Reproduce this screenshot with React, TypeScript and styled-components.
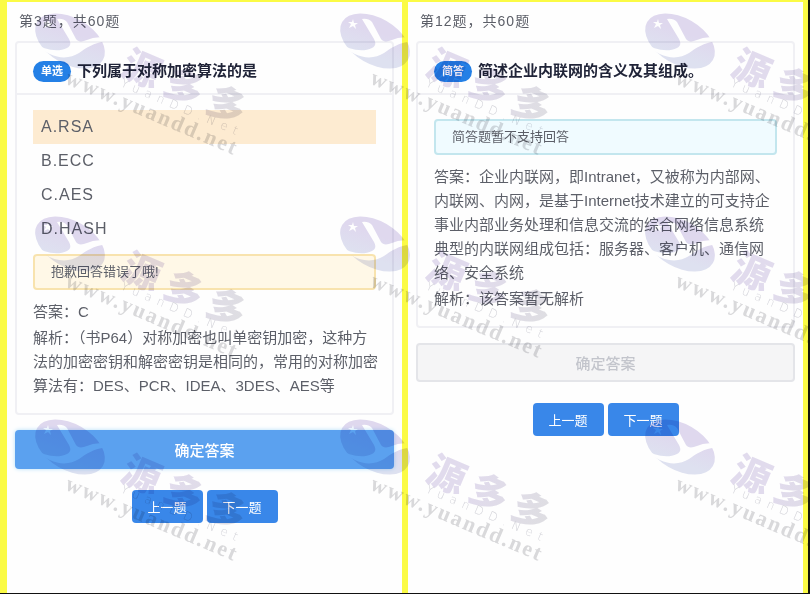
import React, { useState } from "react";
import styled, { createGlobalStyle } from "styled-components";

const GlobalStyle = createGlobalStyle`
  *, *::before, *::after { box-sizing: border-box; }
  body {
    margin: 0;
    color: #5c5f68;
    font-family: "Liberation Sans", "Noto Sans CJK SC", sans-serif;
    font-size: 15px;
  }
  button, input { font-family: inherit; margin: 0; }
`;

const Page = styled.main`
  position: relative;
  display: grid;
  grid-template-columns: 1fr 1fr;
  gap: 6px;
  min-height: 100vh;
  padding: 2px 5px 0 7px;
  background: #fbfb45;
  border-right: 2px solid #15170a;
  border-bottom: 1px solid #111;
  overflow: hidden;
`;

const Screen = styled.section`
  min-width: 0;
  padding: 7px 8px 0;
  background: #fefefe;
`;

const Progress = styled.p`
  margin: 0;
  padding: 0 4px;
  font-size: 14px;
  line-height: 24px;
  letter-spacing: 1px;
`;

const Card = styled.article`
  margin-top: 8px;
  border: 2px solid #f0f0f4;
  border-radius: 4px;
`;

const CardHeader = styled.header`
  display: flex;
  align-items: center;
  gap: 6px;
  height: 52px;
  padding: 6px 16px 0;
  border-bottom: 2px solid #f0f0f4;
`;

const Badge = styled.span`
  flex: none;
  padding: 0 8px;
  border-radius: 11px;
  background: #2480e6;
  color: #fff;
  font-size: 11px;
  font-weight: 700;
  line-height: 21px;
`;

const Title = styled.h2`
  margin: 0;
  color: #202438;
  font-size: 15px;
  font-weight: 700;
  line-height: 22px;
  white-space: nowrap;
`;

const CardBody = styled.div<{ $top: number; $bottom: number }>`
  padding: ${(p) => p.$top}px 16px ${(p) => p.$bottom}px;
`;

const Options = styled.div`
  display: flex;
  flex-direction: column;
`;

const Option = styled.label<{ $picked: boolean }>`
  display: flex;
  height: 34px;
  padding: 0 8px;
  background: ${(p) => (p.$picked ? "#fdebd1" : "transparent")};
  font-size: 16px;
  line-height: 34px;
  letter-spacing: 1px;
  cursor: pointer;
`;

const HiddenRadio = styled.input`
  appearance: none;
  width: 0;
  height: 0;
`;

const Alert = styled.div<{ $tone: "warning" | "info" }>`
  margin-top: ${(p) => (p.$tone === "warning" ? 8 : 0)}px;
  padding: 0 16px;
  border: 2px solid ${(p) => (p.$tone === "warning" ? "#f8e3ae" : "#c3e6ee")};
  border-radius: 4px;
  background: ${(p) => (p.$tone === "warning" ? "#fff8e7" : "#f0fbff")};
  font-size: 13px;
  line-height: 32px;
`;

const Paragraph = styled.p<{ $gap: number }>`
  margin: ${(p) => p.$gap}px 0 0;
  font-size: 15px;
  line-height: 24px;
  white-space: nowrap;
`;

const Line = styled.span`
  display: block;
`;

const Submit = styled.button`
  display: block;
  width: 100%;
  height: 39px;
  margin-top: 15px;
  padding: 0;
  border: 0;
  border-radius: 4px;
  background: #5ba1ef;
  box-shadow: 0 0 4px #b5e0fa;
  color: #fff;
  font-size: 15px;
  font-weight: 500;

  &:disabled {
    border: 2px solid #e4e5e9;
    background: #f5f5f6;
    box-shadow: none;
    color: #c3c5cc;
  }
`;

const Pager = styled.nav`
  display: flex;
  justify-content: center;
  gap: 4px;
  margin-top: 21px;
`;

const PagerButton = styled.button`
  width: 71px;
  height: 33px;
  padding: 0;
  border: 0;
  border-radius: 4px;
  background: #3987e9;
  color: #fff;
  font-size: 13px;
`;

/* Watermarks lie over the whole page and let clicks through. */
const WatermarkLayer = styled.div`
  position: absolute;
  inset: 0;
  display: grid;
  grid-template-columns: repeat(3, 305px);
  grid-auto-rows: 203px;
  overflow: hidden;
  pointer-events: none;
  mix-blend-mode: multiply;
`;

const WatermarkSvg = styled.svg`
  display: block;
  width: 305px;
  height: 203px;
`;

const BrandText = styled.text`
  font-family: "Noto Sans CJK SC", sans-serif;
  font-size: 38px;
  font-weight: 900;
  letter-spacing: 8px;
`;

const LatinText = styled.text`
  font-family: "DejaVu Sans", sans-serif;
  font-size: 12px;
  font-weight: 200;
  letter-spacing: 6px;
`;

const UrlText = styled.text`
  font-family: "Liberation Serif", serif;
  font-size: 22px;
  font-weight: 700;
  letter-spacing: 2px;
`;

function Watermark({ id }: { id: string }) {
  return (
    <WatermarkSvg viewBox="0 0 305 203">
      <defs>
        <linearGradient id={`${id}-disc`} x1="0" y1="0" x2="0.3" y2="1">
          <stop offset="0.4" stopColor="#e0d9ef" />
          <stop offset="0.9" stopColor="#dfe2f1" />
        </linearGradient>
        <linearGradient id={`${id}-brand`} x1="0" y1="0" x2="1" y2="0">
          <stop offset="0.3" stopColor="#e2dcee" />
          <stop offset="1" stopColor="#dfdfe2" />
        </linearGradient>
        <mask id={`${id}-cut`} maskUnits="userSpaceOnUse" x="0" y="0" width="305" height="203">
          <rect width="305" height="203" fill="#fff" />
          <path
            d="M34 43 C43 49 57 53 67 48 C71 46 71 43 69 39 L57 19 Q63 18 67 22 L76 39 C78 42 82 42 87 40 Q95 36 107 38 L107 41 C93 43 86 48 79 53 C68 60 52 60 34 43Z"
            fill="#000"
          />
          <path
            d="M48 19 L49 23 L53 23 L50 25 L51 29 L48 26 L44 28 L46 24 L43 22 L47 22Z"
            fill="#000"
          />
        </mask>
      </defs>
      <g mask={`url(#${id}-cut)`}>
        <ellipse
          cx="70"
          cy="41"
          rx="38"
          ry="23"
          transform="rotate(30 70 41)"
          fill={`url(#${id}-disc)`}
        />
      </g>
      <BrandText transform="translate(119 74) rotate(23)" fill={`url(#${id}-brand)`}>
        源多多
      </BrandText>
      <LatinText transform="translate(120 86) rotate(23)" fill="#d6d6dc">
        YuanDD.Net
      </LatinText>
      <UrlText transform="translate(64 83) rotate(23)" fill="#dadadc">
        www.yuandd.net
      </UrlText>
    </WatermarkSvg>
  );
}

const choices = ["A.RSA", "B.ECC", "C.AES", "D.HASH"];

const explanation = [
  "解析：（书P64）对称加密也叫单密钥加密，这种方",
  "法的加密密钥和解密密钥是相同的，常用的对称加密",
  "算法有：DES、PCR、IDEA、3DES、AES等",
];

const intranetAnswer = [
  "答案：企业内联网，即Intranet，又被称为内部网、",
  "内联网、内网，是基于Internet技术建立的可支持企",
  "事业内部业务处理和信息交流的综合网络信息系统",
  "典型的内联网组成包括：服务器、客户机、通信网",
  "络、安全系统",
];

function TextBlock({ lines, gap }: { lines: string[]; gap: number }) {
  return (
    <Paragraph $gap={gap}>
      {lines.map((line) => (
        <Line key={line}>{line}</Line>
      ))}
    </Paragraph>
  );
}

function PageButtons() {
  return (
    <Pager aria-label="题目导航">
      <PagerButton type="button">上一题</PagerButton>
      <PagerButton type="button">下一题</PagerButton>
    </Pager>
  );
}

export default function App() {
  const [picked, setPicked] = useState("A.RSA");

  return (
    <>
      <GlobalStyle />
      <Page>
        <Screen>
          <Progress>第3题，共60题</Progress>
          <Card>
            <CardHeader>
              <Badge>单选</Badge>
              <Title id="question-3">下列属于对称加密算法的是</Title>
            </CardHeader>
            <CardBody $top={15} $bottom={15}>
              <Options role="radiogroup" aria-labelledby="question-3">
                {choices.map((choice) => (
                  <Option key={choice} $picked={choice === picked}>
                    <HiddenRadio
                      type="radio"
                      name="question-3"
                      value={choice}
                      checked={choice === picked}
                      onChange={() => setPicked(choice)}
                    />
                    {choice}
                  </Option>
                ))}
              </Options>
              <Alert $tone="warning" role="status">
                抱歉回答错误了哦!
              </Alert>
              <TextBlock gap={10} lines={["答案：C"]} />
              <TextBlock gap={2} lines={explanation} />
            </CardBody>
          </Card>
          <Submit type="button">确定答案</Submit>
          <PageButtons />
        </Screen>
        <Screen>
          <Progress>第12题，共60题</Progress>
          <Card>
            <CardHeader>
              <Badge>简答</Badge>
              <Title>简述企业内联网的含义及其组成。</Title>
            </CardHeader>
            <CardBody $top={24} $bottom={15}>
              <Alert $tone="info" role="status">
                简答题暂不支持回答
              </Alert>
              <TextBlock gap={10} lines={intranetAnswer} />
              <TextBlock gap={2} lines={["解析：该答案暂无解析"]} />
            </CardBody>
          </Card>
          <Submit type="button" disabled>
            确定答案
          </Submit>
          <PageButtons />
        </Screen>
        <WatermarkLayer aria-hidden="true">
          {Array.from({ length: 9 }, (_, i) => (
            <Watermark key={i} id={`mark-${i}`} />
          ))}
        </WatermarkLayer>
      </Page>
    </>
  );
}
